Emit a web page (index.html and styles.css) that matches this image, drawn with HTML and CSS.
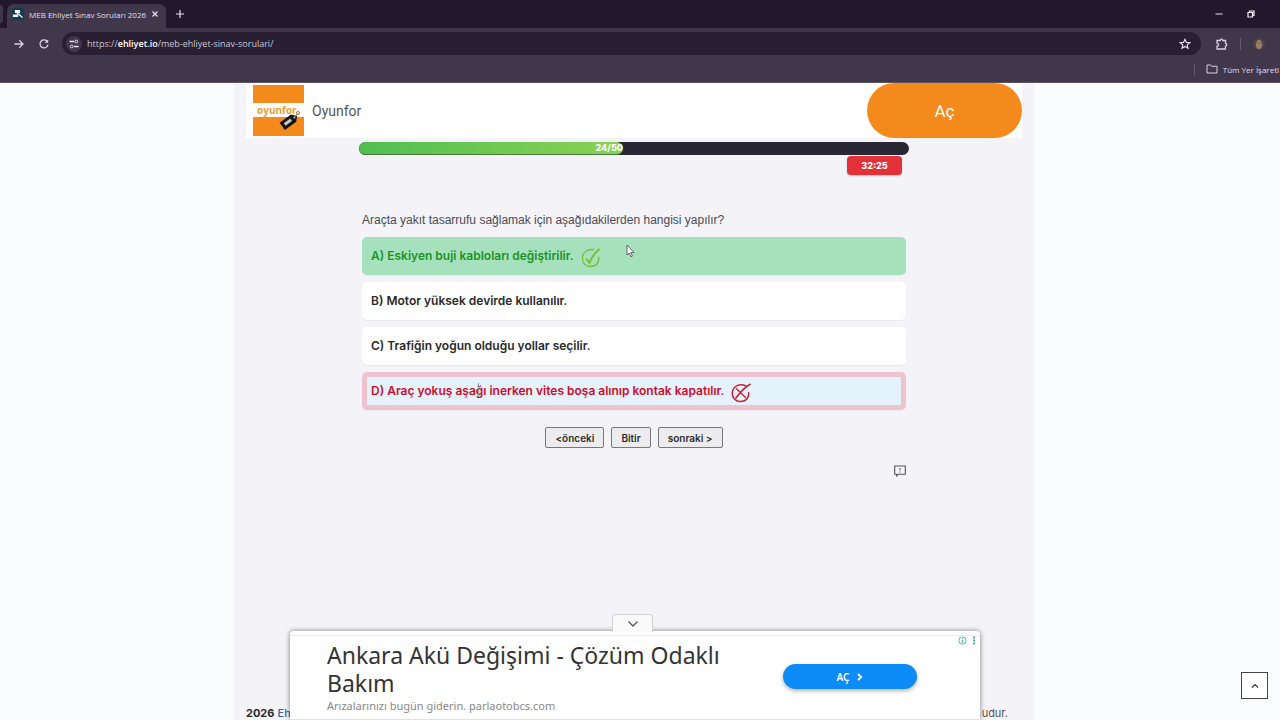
FILE: index.html
```html
<!DOCTYPE html>
<html lang="tr">
<head>
    <meta charset="utf-8">
    <title>MEB Ehliyet Sınav Soruları 2026</title>
    <link rel="stylesheet" href="styles.css">
</head>
<body>
    <header class="browser">
        <div class="tabs">
            <div class="tab-edge"></div>
            <div class="tab">
                <svg class="favicon" width="12" height="12" viewBox="0 0 12 12"><rect width="12" height="12" rx="2" fill="#123a5c"/><path d="M3.500 2.500h4v2h-4zM1.500 7h3.500l.500 1.500h-4zM6.500 6l4 3.500M5 5l2 2" fill="#fff" stroke="#fff" stroke-width="1.200"/></svg>
                <span class="tab-title">MEB Ehliyet Sınav Soruları 2026</span>
                <button class="icon-btn" aria-label="Sekmeyi kapat"><svg width="8" height="8" viewBox="0 0 8 8"><path d="M1.500 1.500l5 5M6.500 1.500l-5 5" stroke="#e8e2ee" stroke-width="1.200"/></svg></button>
            </div>
            <button class="icon-btn new-tab" aria-label="Yeni sekme"><svg width="10" height="10" viewBox="0 0 10 10"><path d="M5 1v8M1 5h8" stroke="#e8e2ee" stroke-width="1.200"/></svg></button>
            <div class="window-buttons">
                <button class="icon-btn" aria-label="Simge durumuna küçült"><svg width="8" height="8" viewBox="0 0 8 8"><path d="M.500 4h7" stroke="#e8e2ee"/></svg></button>
                <button class="icon-btn" aria-label="Önceki boyut"><svg width="8" height="8" viewBox="0 0 8 8"><path d="M1 2.500h4.500V7H1zM2.500 2.500V1H7v4.500H5.500" fill="none" stroke="#f2eef6" stroke-width="1.200"/></svg></button>
            </div>
        </div>
        <div class="toolbar">
            <button class="icon-btn" aria-label="İleri"><svg width="12" height="12" viewBox="0 0 12 12"><path d="M1.500 6h8.500M6.300 2.300L10 6 6.300 9.700" fill="none" stroke="#d8d2de" stroke-width="1.300"/></svg></button>
            <button class="icon-btn" aria-label="Yenile"><svg width="12" height="12" viewBox="0 0 12 12"><path d="M9.600 4A4 4 0 1 0 10 6.700" fill="none" stroke="#d8d2de" stroke-width="1.300"/><path d="M10.200 1.200v3.600H6.600z" fill="#d8d2de"/></svg></button>
            <div class="address">
                <span class="site-info"><svg width="10" height="10" viewBox="0 0 10 10"><path d="M.500 2.500h4.500M5 7.500h4.500" stroke="#e8e2ee" stroke-width="1.300"/><circle cx="7.300" cy="2.500" r="1.400" fill="none" stroke="#e8e2ee"/><circle cx="2.700" cy="7.500" r="1.400" fill="none" stroke="#e8e2ee"/></svg></span>
                <span class="url">https://<b>ehliyet.io</b>/meb-ehliyet-sinav-sorulari/</span>
                <button class="icon-btn" aria-label="Yer işareti ekle"><svg width="12" height="12" viewBox="0 0 12 12"><path d="M6 1.300l1.400 3.100 3.400.300-2.600 2.200.800 3.400-3-1.800-3 1.800.800-3.400L1.200 4.700l3.400-.300z" fill="none" stroke="#e8e2ee" stroke-width="1.100"/></svg></button>
            </div>
            <button class="icon-btn" aria-label="Uzantılar"><svg width="12" height="12" viewBox="0 0 12 12"><path d="M1 2.500h3.200a1.300 1.300 0 0 1 2.600 0H9.500v2.800a1.300 1.300 0 0 1 0 2.600V11H1V8.200a1.500 1.500 0 0 0 0-3z" fill="none" stroke="#d8d2de" stroke-width="1.300"/></svg></button>
            <span class="divider"></span>
            <svg class="avatar" width="12" height="12" viewBox="0 0 12 12"><circle cx="6" cy="6" r="5.800" fill="#55453f"/><ellipse cx="6" cy="6.500" rx="3" ry="4.500" fill="#96826c"/><path d="M4 5h1.500M6.800 5h1.200" stroke="#5d4c42"/></svg>
        </div>
        <div class="bookmarks">
            <span class="divider"></span>
            <svg width="12" height="10" viewBox="0 0 12 10"><path d="M1 1h3.500L6 2.300h5V9H1z" fill="none" stroke="#d8d2de"/></svg>
            <span>Tüm Yer İşaretl</span>
        </div>
    </header>

    <main class="page">
        <div class="container">
            <div class="top-ad">
                <svg width="51" height="51" viewBox="0 0 51 51">
                    <rect width="51" height="51" fill="#fff"/>
                    <rect width="51" height="18" fill="#f4891c"/>
                    <rect y="32" width="51" height="19" fill="#f4891c"/>
                    <text class="logo-text" x="4" y="29">oyunfor</text>
                    <g transform="rotate(-36 36 37)"><path d="M28 32h14l4 5-4 4H28z" fill="#151515"/><rect x="31" y="35" width="8" height="3" fill="#c8c8c8"/><circle cx="43" cy="36.500" r="1" fill="#fff"/></g>
                    <path d="M41 33l4-5" stroke="#b56a20"/><circle cx="45" cy="28" r="1.500" fill="#fff" stroke="#b56a20"/>
                </svg>
                <span class="top-ad-name">Oyunfor</span>
                <button class="top-ad-btn">Aç</button>
            </div>

            <div class="progress">
                <div class="progress-fill" style="width: 48%">24/50</div>
            </div>

            <section class="quiz">
                <div class="timer">32:25</div>
                <p class="question">Araçta yakıt tasarrufu sağlamak için aşağıdakilerden hangisi yapılır?</p>
                <div class="answers">
                    <button class="answer correct">A) Eskiyen buji kabloları değiştirilir.
                        <svg class="mark" width="20" height="20" viewBox="0 0 20 20"><path d="M13 1.500C6 .500 1 5 1.500 11c.500 5 4 7.700 8.500 7.500 5 0 8.500-4 7.500-9.500" fill="none" stroke="#6fc02c" stroke-width="1.300"/><path d="M5 10.500l3.500 4.500C10.500 9.500 13.500 5 18.500 1" fill="none" stroke="#6fc02c" stroke-width="1.700"/></svg>
                    </button>
                    <button class="answer">B) Motor yüksek devirde kullanılır.</button>
                    <button class="answer">C) Trafiğin yoğun olduğu yollar seçilir.</button>
                    <button class="answer wrong">D) Araç yokuş aşağı inerken vites boşa alınıp kontak kapatılır.
                        <svg class="mark" width="20" height="20" viewBox="0 0 20 20"><path d="M15 3C9 0 2 3 1.300 9.500.800 15 5 19 10 18.500c5 0 8.500-4 7.500-9.500" fill="none" stroke="#d21f35" stroke-width="1.500"/><path d="M5 5.500c3 2.500 6.500 6 10 9.500M4.500 15.500C8.500 10 13 4.500 19.500 1" fill="none" stroke="#d21f35" stroke-width="1.600"/></svg>
                    </button>
                </div>
                <div class="nav">
                    <button class="nav-btn">&lt;önceki</button>
                    <button class="nav-btn">Bitir</button>
                    <button class="nav-btn">sonraki &gt;</button>
                </div>
                <button class="icon-btn report" aria-label="Hata bildir"><svg width="12" height="12" viewBox="0 0 12 12"><path d="M.700 1h10.600v8.200H4.500L2.700 11V9.200h-2z" fill="none" stroke="#555" stroke-width="1.100"/><path d="M6 3v2.500M6 6.500v1" stroke="#555"/></svg></button>
            </section>

            <footer class="footer">
                <span><b>2026</b> <a href="#">Eh</a></span>
                <span>udur.</span>
            </footer>
        </div>

        <aside class="anchor-ad">
            <button class="collapse" aria-label="Reklamı gizle"><svg width="12" height="8" viewBox="0 0 12 8"><path d="M1.500 1.500L6 6l4.500-4.500" fill="none" stroke="#555" stroke-width="1.300"/></svg></button>
            <div class="anchor-text">
                <div class="anchor-title">Ankara Akü Değişimi - Çözüm Odaklı Bakım</div>
                <div class="anchor-desc">Arızalarınızı bugün giderin. parlaotobcs.com</div>
            </div>
            <button class="anchor-btn">AÇ <svg width="6" height="8" viewBox="0 0 6 8"><path d="M1 1l3.200 3L1 7" fill="none" stroke="#fff" stroke-width="1.800"/></svg></button>
            <svg class="ad-choices" width="18" height="9" viewBox="0 0 18 9"><circle cx="4.500" cy="4.500" r="3.700" fill="none" stroke="#3fb8a0" stroke-width=".900"/><path d="M4.500 4v3M4.500 2v1" stroke="#3fb8a0"/><path d="M15 .500h2v2h-2zM15 3.500h2v2h-2zM15 6.500h2v2h-2z" fill="#3fb8a0"/></svg>
        </aside>

        <button class="to-top" aria-label="Yukarı çık"><svg width="8" height="6" viewBox="0 0 8 6"><path d="M1 4.500L4 1.500l3 3" fill="none" stroke="#333" stroke-width="1.200"/></svg></button>
        <span class="text-cursor"></span>
        <svg class="pointer" width="9" height="14" viewBox="0 0 9 14"><path d="M1 1v10l2.300-2 1.600 3.800 1.500-.700L4.900 8.500H8z" fill="#fff" stroke="#555" stroke-width=".900"/></svg>
    </main>
</body>
</html>
```

FILE: styles.css
```css
* {
    box-sizing: border-box;
}

body {
    margin: 0;
    height: 100vh;
    display: flex;
    flex-direction: column;
    overflow: hidden;
    font-family: "Inter", sans-serif;
    background-color: #fafbfd;
}

button {
    font-family: inherit;
    cursor: pointer;
}

.icon-btn {
    display: flex;
    align-items: center;
    padding: 0;
    border: none;
    background: none;
}

/* browser window */

.browser {
    flex: none;
    font-family: "Open Sans", sans-serif;
    font-size: 8px;
    color: #e4deea;
    background-color: #40374a;
    border-bottom: 1px solid #5c5464;
}

.tabs {
    display: flex;
    align-items: flex-end;
    height: 28px;
    background-color: #21182d;
}

.tab-edge {
    width: 3px;
    height: 18px;
    margin-bottom: 5px;
    border-radius: 0 5px 5px 0;
    background-color: #40374a;
}

.tab {
    display: flex;
    align-items: center;
    gap: 5px;
    width: 159px;
    height: 24px;
    margin-left: 4px;
    padding: 0 7px 4px 5px;
    border-radius: 7px 7px 0 0;
    background-color: #40374a;
}

.favicon {
    flex: none;
}

.tab-title {
    flex: 1;
    white-space: nowrap;
}

.new-tab {
    height: 28px;
    margin-left: 9px;
}

.window-buttons {
    display: flex;
    gap: 24px;
    height: 28px;
    margin-left: auto;
    padding-right: 25px;
}

.toolbar {
    display: flex;
    align-items: center;
    gap: 13px;
    height: 31px;
    padding: 0 15px 0 13px;
}

.address {
    flex: 1;
    display: flex;
    align-items: center;
    gap: 5px;
    height: 23px;
    margin: 0 2px 0 -1px;
    padding: 0 10px 0 4px;
    border-radius: 12px;
    background-color: #281f33;
}

.site-info {
    display: flex;
    align-items: center;
    justify-content: center;
    width: 16px;
    height: 16px;
    border-radius: 50%;
    background-color: #40374a;
}

.url {
    flex: 1;
    font-size: 9px;
    color: #cdc6d4;
}

.url b {
    font-weight: 600;
    color: #fff;
}

.divider {
    width: 1px;
    height: 12px;
    background-color: #625a6c;
}

.toolbar .divider {
    margin: 0 -1px;
}

.bookmarks {
    display: flex;
    justify-content: flex-end;
    align-items: center;
    gap: 5px;
    height: 23px;
    padding: 0 1px 3px 0;
}

.bookmarks .divider {
    margin-right: 6px;
}

/* page */

.page {
    position: relative;
    flex: 1;
    display: flex;
    min-height: 0;
    padding-right: 12px;
}

.container {
    display: flex;
    flex-direction: column;
    width: 100%;
    max-width: 800px;
    margin: 0 auto;
    padding: 0 12px;
    background-color: #f4f3f8;
}

.top-ad {
    display: flex;
    align-items: center;
    gap: 8px;
    height: 55px;
    padding-left: 7px;
    background-color: #fff;
}

.logo-text {
    font-family: "Open Sans", sans-serif;
    font-size: 10px;
    font-weight: 700;
    fill: #f0a030;
}

.top-ad-name {
    font-family: "Roboto", sans-serif;
    font-size: 14px;
    color: #555;
}

.top-ad-btn {
    width: 155px;
    height: 55px;
    margin-left: auto;
    border: none;
    border-radius: 28px;
    font-family: "Roboto", sans-serif;
    font-size: 17px;
    color: #fff;
    background-color: #f4891c;
}

.progress {
    width: 100%;
    max-width: 550px;
    height: 13px;
    margin: 4px auto 0;
    border-radius: 7px;
    background-color: #282733;
}

.progress-fill {
    height: 13px;
    border-bottom: 1px solid #4a7b3c;
    border-radius: 7px;
    font-size: 9px;
    font-weight: 800;
    line-height: 12px;
    text-align: right;
    color: #fff;
    background: linear-gradient(to right, #50bf50, #8bd153);
}

.quiz {
    width: 100%;
    max-width: 544px;
    margin: 1px auto 0;
}

.timer {
    width: 55px;
    margin: 0 4px 0 auto;
    border-radius: 4px;
    font-size: 9px;
    font-weight: 800;
    line-height: 19px;
    text-align: center;
    color: #fff;
    background-color: #e33139;
    box-shadow: 0 1px 2px rgba(0,0,0,0.2);
}

.question {
    margin: 36px 0 8px;
    font-family: "Liberation Sans", sans-serif;
    font-size: 12px;
    line-height: 18px;
    color: #4b4b52;
}

.answers {
    display: flex;
    flex-direction: column;
    gap: 7px;
}

.answer {
    display: flex;
    align-items: center;
    gap: 7px;
    height: 38px;
    padding: 0 4px 2px;
    border: 5px solid #fff;
    border-radius: 5px;
    font-size: 12px;
    font-weight: 600;
    text-align: left;
    color: #292929;
    background-color: #fff;
    box-shadow: 0 1px 1px rgba(0,0,0,0.04);
}

.correct {
    border-color: #a6e1bd;
    color: #1b9424;
    background-color: #a6e1bd;
}

.wrong {
    border-color: #efc3cd;
    color: #d30b2b;
    background-color: #e3f2fb;
}

.mark {
    flex: none;
    margin-top: 6px;
}

.nav {
    display: flex;
    justify-content: center;
    gap: 7px;
    margin-top: 17px;
}

.nav-btn {
    height: 21px;
    padding: 0 9px;
    border: 1px solid #77777c;
    border-radius: 2px;
    font-size: 10px;
    font-weight: 600;
    color: #2c2c2c;
    background-color: #ececef;
}

.report {
    margin: 17px 0 0 auto;
}

.footer {
    display: flex;
    justify-content: space-between;
    margin-top: auto;
    padding-right: 14px;
    font-size: 11px;
    line-height: 14px;
    color: #555;
}

.footer b {
    color: #292929;
}

.footer a {
    font-weight: 500;
    color: #3565a5;
    text-decoration: none;
}

.anchor-ad {
    position: absolute;
    bottom: 0;
    left: 0;
    right: 10px;
    display: flex;
    align-items: flex-start;
    justify-content: space-between;
    max-width: 690px;
    height: 89px;
    margin: 0 auto;
    padding: 6px 63px 0 37px;
    border-top: 4px solid #fff;
    border-bottom: 1px solid #e2e2e2;
    border-radius: 4px 4px 0 0;
    font-family: "Noto Sans", sans-serif;
    background-color: #fff;
    box-shadow: 0 0 5px rgba(0,0,0,0.5), inset 0 1px 0 #eee;
}

.collapse {
    position: absolute;
    top: -21px;
    left: 50%;
    display: flex;
    align-items: center;
    justify-content: center;
    width: 41px;
    height: 18px;
    margin-left: -23px;
    padding: 0;
    border: 1px solid #d2d2d6;
    border-bottom: none;
    border-radius: 4px 4px 0 0;
    background-color: #fafafa;
}

.anchor-text {
    width: 410px;
}

.anchor-title {
    font-size: 23px;
    line-height: 28px;
    color: #333;
}

.anchor-desc {
    font-size: 11px;
    line-height: 18px;
    color: #888;
}

.anchor-btn {
    display: flex;
    align-items: center;
    justify-content: center;
    gap: 8px;
    width: 134px;
    height: 25px;
    margin-top: 23px;
    border: none;
    border-radius: 13px;
    font-size: 10px;
    font-weight: 600;
    color: #fff;
    background-color: #0d8bf6;
    box-shadow: 0 2px 4px rgba(0,0,0,0.3);
}

.ad-choices {
    position: absolute;
    top: 1px;
    right: 4px;
}

.to-top {
    position: absolute;
    right: 12px;
    bottom: 21px;
    display: flex;
    align-items: center;
    justify-content: center;
    width: 27px;
    height: 27px;
    padding: 0;
    border: 1px solid #444;
    background-color: #fff;
}

.text-cursor {
    position: absolute;
    top: 300px;
    left: 478px;
    width: 1px;
    height: 14px;
    background-color: #9a8f9a;
}

.pointer {
    position: absolute;
    top: 161px;
    left: 626px;
}
```
